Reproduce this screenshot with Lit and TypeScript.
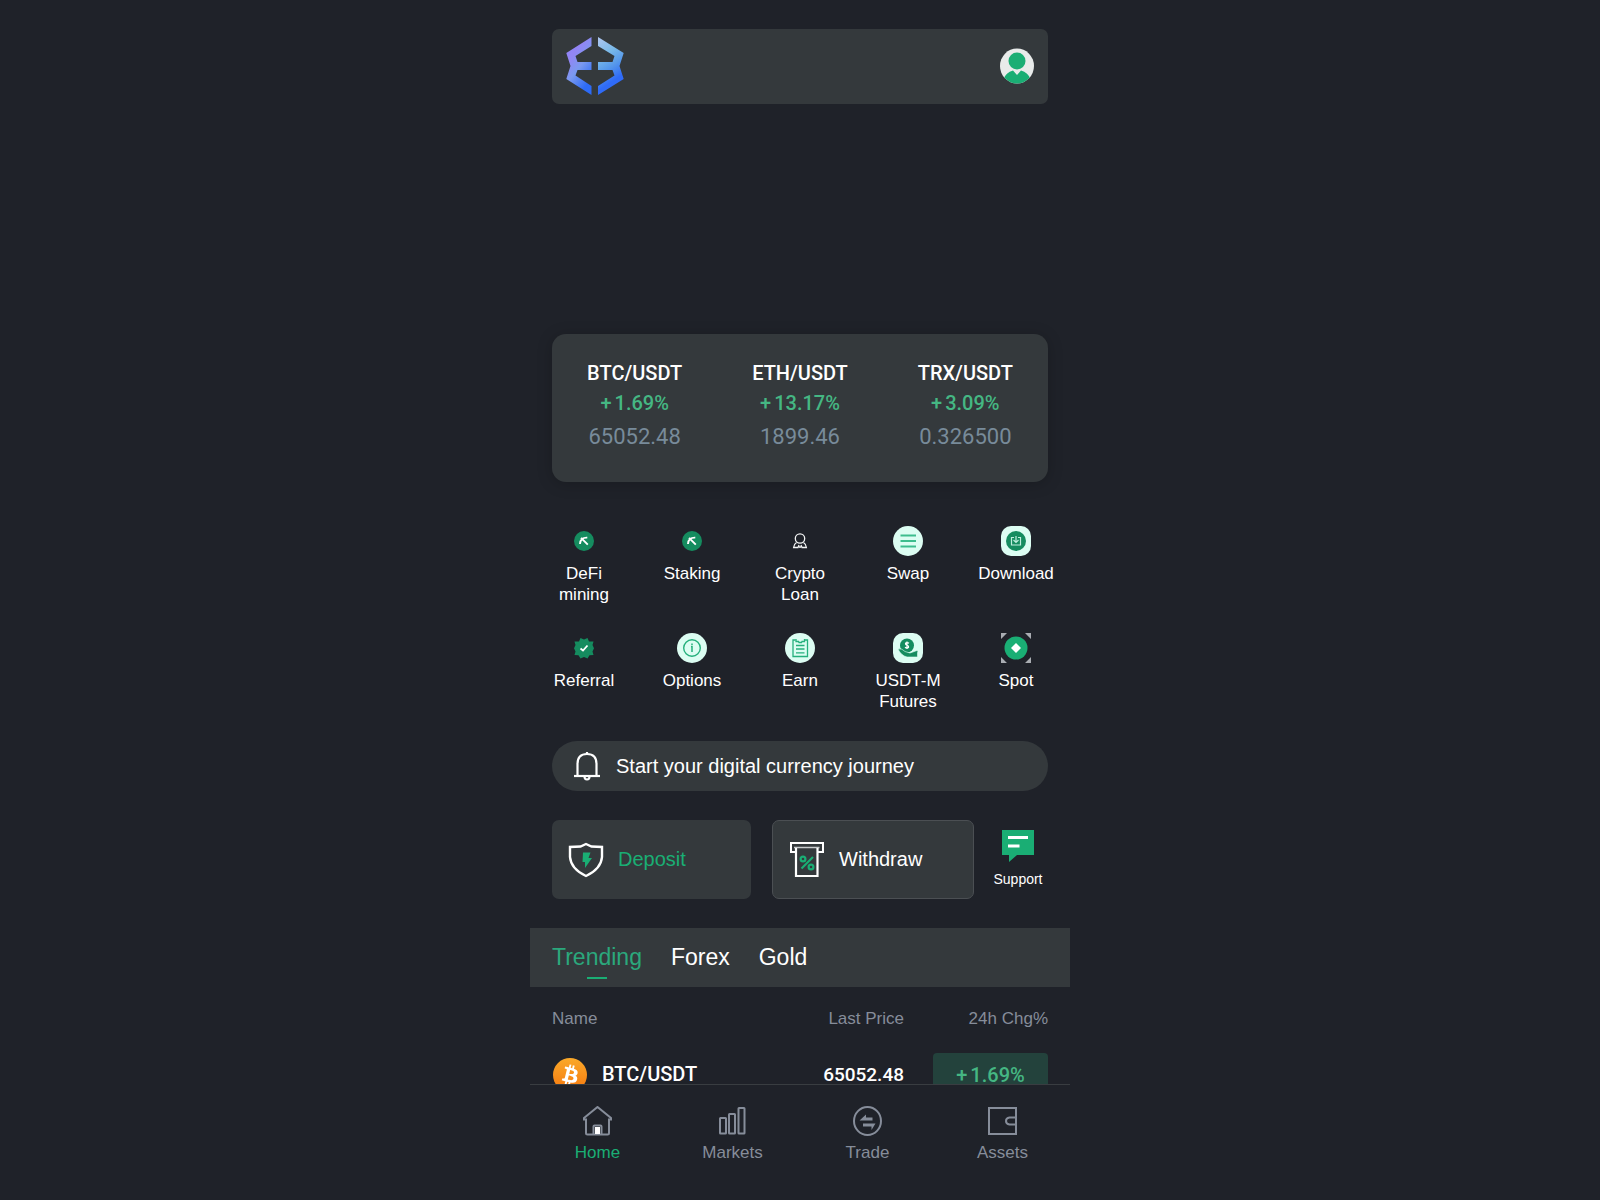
import { LitElement, html, css, svg, TemplateResult } from "lit";
import { customElement, state } from "lit/decorators.js";

interface Ticker { pair: string; change: string; price: string; }
interface Shortcut { label: string; icon: TemplateResult; }

const logo = html`<svg width="58" height="58" viewBox="0 0 58 58" aria-hidden="true">
  <defs>
    <linearGradient id="lg-left" x1="0" y1="0.1" x2="0.5" y2="1">
      <stop offset="0" stop-color="#8f83f8" /><stop offset="0.3" stop-color="#9285f4" />
      <stop offset="0.6" stop-color="#7b9af0" /><stop offset="1" stop-color="#2d6bf6" />
    </linearGradient>
    <linearGradient id="lg-right" x1="0.2" y1="0" x2="0.5" y2="1">
      <stop offset="0" stop-color="#a9c5ef" /><stop offset="0.3" stop-color="#79b9e8" />
      <stop offset="0.55" stop-color="#5698ea" /><stop offset="0.8" stop-color="#2f6bf8" /><stop offset="1" stop-color="#2f6bf8" />
    </linearGradient>
  </defs>
  <path fill="url(#lg-left)" d="M25.500 0V9L9.500 19L11.500 25H25.500V33H11.500L9.500 38.500L25.500 49V58L0.300 42L4.500 29L0.300 16Z" />
  <path fill="url(#lg-right)" d="M32 0V9L48.500 19L46.500 25H32V33H46.500L48.500 38.500L32 49V58L57.700 42L53.500 29L57.700 16Z" />
</svg>`;

const avatar = html`<svg width="34" height="36" viewBox="0 0 34 36" aria-hidden="true">
  <defs><clipPath id="avatar-clip"><ellipse cx="17" cy="18" rx="17" ry="17.500" /></clipPath></defs>
  <ellipse cx="17" cy="18" rx="17" ry="17.500" fill="#e8ebea" />
  <g clip-path="url(#avatar-clip)" fill="#1aae74">
    <circle cx="17" cy="13" r="8.500" />
    <path d="M3 32Q6 24 13 22.500L17 27L21 22.500Q28 24 31 32V37H3Z" />
  </g>
</svg>`;

const miningIcon = html`<svg width="30" height="30" viewBox="0 0 30 30" aria-hidden="true">
  <circle cx="15" cy="15" r="10" fill="#158c5f" />
  <path d="M11 18Q11.300 14.500 13 13Q15 11.400 18.300 11.600M12 11.800L18.800 18.600" fill="none" stroke="#fff" stroke-width="1.900" />
</svg>`;

const loanIcon = html`<svg width="30" height="30" viewBox="0 0 30 30" aria-hidden="true">
  <g fill="none" stroke="#f2f4f4" stroke-width="1.300">
    <circle cx="15" cy="12.500" r="4.700" />
    <path d="M11.500 16.500Q9 18 8.600 21.500H13L14 19M18.500 16.500Q21 18 21.400 21.500H17L16 19" />
  </g>
  <circle cx="15" cy="21" r="1" fill="#fff" />
</svg>`;

const swapIcon = html`<svg width="30" height="30" viewBox="0 0 30 30" aria-hidden="true">
  <circle cx="15" cy="15" r="15" fill="#dcfdf2" />
  <path d="M7.500 9.500H23M7.500 15H23M7.500 20.500H23" stroke="#3dbd8d" stroke-width="2" />
</svg>`;

const downloadIcon = html`<svg width="30" height="30" viewBox="0 0 30 30" aria-hidden="true">
  <rect width="30" height="30" rx="10" fill="#dcfdf2" />
  <circle cx="15" cy="15" r="10" fill="#158c5f" />
  <g fill="none" stroke="#bfeedd" stroke-width="1.200">
    <path d="M13 11.500H10.500V19H19.500V11.500H17" /><path d="M15 10V16M12.500 14L15 16.500L17.500 14" />
  </g>
</svg>`;

const referralIcon = html`<svg width="30" height="30" viewBox="0 0 30 30" aria-hidden="true">
  <path d="M11.500 5L15 6.500L18.500 5L20 8.400L24.500 8.500L23.500 12L25 15.300L23.500 18.500L24.500 22L20.500 22.300L18.500 25.500L15 24L11.500 25.500L9.500 22.300L5.500 22L6.500 18.500L5 15.300L6.500 12L5.500 8.500L10 8.400Z" fill="#158c5f" />
  <path d="M11.500 15.500L14 17.500L18.500 12.500" fill="none" stroke="#fff" stroke-width="1.800" />
</svg>`;

const optionsIcon = html`<svg width="30" height="30" viewBox="0 0 30 30" aria-hidden="true">
  <circle cx="15" cy="15" r="15" fill="#dcfdf2" />
  <circle cx="15" cy="15" r="8.300" fill="none" stroke="#25b07c" stroke-width="1.400" />
  <path d="M15 10.500V12M14 13.500H15V19" fill="none" stroke="#25b07c" stroke-width="1.500" />
</svg>`;

const earnIcon = html`<svg width="30" height="30" viewBox="0 0 30 30" aria-hidden="true">
  <circle cx="15" cy="15" r="15" fill="#dcfdf2" />
  <g fill="none" stroke="#25b07c" stroke-width="1.300">
    <path d="M10.500 7H8V23.500H22.500V7H19.500" /><path d="M11 6V8.500H13.500L14 9.500H16.500L17 8.500H19.500V6" />
    <path d="M11 12.500H19.500M11 16H19.500M11 19.800H19.500" />
  </g>
</svg>`;

const futuresIcon = html`<svg width="30" height="30" viewBox="0 0 30 30" aria-hidden="true">
  <rect width="30" height="30" rx="10" fill="#dcfdf2" />
  <circle cx="14" cy="12.500" r="7" fill="#158c5f" />
  <path d="M5 16Q9 15 12 18.500L17 20L24 17.500Q25.500 18 24.500 20V24H14Q8 22.500 5 16Z" fill="#158c5f" stroke="#dcfdf2" stroke-width="0.600" />
  <path d="M16 10.300Q14 8.800 12.500 10.200Q12.300 11.800 14 12.200Q16 12.800 15.600 14.300Q14 15.800 12 14.200M14 8.500V16" fill="none" stroke="#fff" stroke-width="1.200" />
</svg>`;

const spotIcon = html`<svg width="30" height="30" viewBox="0 0 30 30" aria-hidden="true">
  <path d="M0 0H6L0 6ZM30 0V6L24 0ZM0 30V24L6 30ZM30 30H24L30 24Z" fill="#a9adb2" />
  <circle cx="15" cy="15" r="11.500" fill="#1aae74" />
  <path d="M15 10L20 15L15 20L10 15Z" fill="#fff" />
</svg>`;

const bellIcon = html`<svg width="28" height="30" viewBox="0 0 28 30" aria-hidden="true">
  <g fill="none" stroke="#fff" stroke-width="2.200">
    <path d="M4.500 24V13Q4.500 3 14 3Q23.500 3 23.500 13V24" /><path d="M1 25H27" />
    <path d="M11.500 25.500Q11.500 28.500 14 28.500Q16.500 28.500 16.500 25.500M14 3V1" />
  </g>
</svg>`;

const shieldIcon = html`<svg width="36" height="36" viewBox="0 0 36 36" aria-hidden="true">
  <path d="M18 2L23.500 4.500L34 5V15Q33 27 18 34Q3 27 2 15V5L12.500 4.500Z" fill="none" stroke="#fff" stroke-width="2.400" />
  <path d="M15 10.500H22.500L20.500 16H24L17 26V20H14.500Z" fill="#1aae74" />
</svg>`;

const atmIcon = html`<svg width="36" height="36" viewBox="0 0 36 36" aria-hidden="true">
  <path d="M6 10H2V1H34V10H29" fill="none" stroke="#fff" stroke-width="2" />
  <path d="M5 5.500H30.500" stroke="#c9cccd" stroke-width="1.500" />
  <path d="M7 6V34H28.500V6" fill="none" stroke="#fff" stroke-width="2.200" />
  <g fill="none" stroke="#1aae74" stroke-width="2.200">
    <path d="M12.500 26.500L24 15" /><circle cx="14" cy="17" r="2.400" /><circle cx="22" cy="25" r="2.400" />
  </g>
</svg>`;

const chatIcon = html`<svg width="32" height="32" viewBox="0 0 32 32" aria-hidden="true">
  <path d="M0 0H32V25H15L7 32V25H0Z" fill="#1aae74" />
  <path d="M6 7.500H26M6 16H17.500" stroke="#fff" stroke-width="3" />
</svg>`;

const bitcoinIcon = html`<svg width="34" height="34" viewBox="0 0 32 32" aria-hidden="true">
  <defs><linearGradient id="btc" x1="0" y1="0" x2="0" y2="1">
    <stop offset="0" stop-color="#faa92a" /><stop offset="1" stop-color="#f6780e" /></linearGradient></defs>
  <circle cx="16" cy="16" r="16" fill="url(#btc)" />
  <path fill="#fff" d="M23.189 14.020c.314-2.096-1.283-3.223-3.465-3.975l.708-2.840-1.728-.430-.690 2.765c-.454-.114-.920-.220-1.385-.326l.695-2.783L15.596 6l-.708 2.839c-.376-.086-.746-.170-1.104-.260l.002-.009-2.384-.595-.460 1.846s1.283.294 1.256.312c.700.175.826.638.805 1.006l-.806 3.235c.048.012.110.030.180.057l-.183-.045-1.130 4.532c-.086.212-.303.531-.793.410.018.025-1.256-.313-1.256-.313l-.858 1.978 2.250.561c.418.105.828.215 1.231.318l-.715 2.872 1.727.430.708-2.840c.472.127.930.245 1.378.357l-.706 2.828 1.728.430.715-2.866c2.948.558 5.164.333 6.097-2.333.752-2.146-.037-3.385-1.588-4.192 1.130-.260 1.980-1.003 2.207-2.538zm-3.950 5.538c-.533 2.147-4.148.986-5.320.695l.950-3.805c1.172.293 4.929.872 4.370 3.110zm.535-5.569c-.487 1.953-3.495.960-4.470.717l.860-3.450c.975.243 4.118.696 3.610 2.733z" />
</svg>`;

const homeIcon = svg`<path d="M1 12L14.500 1L28 12V13.500H26V27Q26 28.500 24.500 28.500H4.500Q3 28.500 3 27V13.500H1Z" /><path d="M10.500 28.500V20.500Q10.500 19.500 11.500 19.500H17.500Q18.500 19.500 18.500 20.500V28.500" /><path class="door" d="M12 21H17V28H12Z" />`;
const marketsIcon = svg`<rect x="2" y="12" width="6" height="15.500" rx="0.500" /><rect x="11" y="8" width="6" height="19.500" rx="0.500" /><rect x="20.500" y="2" width="6" height="25.500" rx="0.500" />`;
const tradeIcon = svg`<ellipse cx="14.500" cy="15" rx="13.500" ry="14" /><path class="solid" d="M6.500 14.500L13 8.500V11.500H19.500V14.500ZM22.500 17.500L18.500 24V20.500H10V17.500Z" />`;
const assetsIcon = svg`<path d="M1 2H28V28H1Z" /><path d="M28 11.500H21.500Q18 12 18 15Q18 18 21.500 18.500H28" />`;

@customElement("app-root")
export class AppRoot extends LitElement {
  static styles = css`
    :host {
      display: flex;
      flex-direction: column;
      height: 100vh;
      background: #1f2229;
      color: #fff;
      font-family: "Liberation Sans", Arial, sans-serif;
      font-size: 17px;
      line-height: 21px;
    }
    * { box-sizing: border-box; }
    svg { display: block; flex: none; }
    a { color: inherit; text-decoration: none; }
    button {
      font: inherit;
      color: inherit;
      background: none;
      border: 0;
      padding: 0;
      cursor: pointer;
    }
    .scroll {
      flex: 1;
      min-height: 0;
      overflow-y: auto;
      scrollbar-width: none;
      background: #1f2229;
    }
    .column { width: 100%; max-width: 540px; margin: 0 auto; }
    .inset { margin-left: 22px; margin-right: 22px; }
    .topbar {
      margin-top: 29px;
      padding: 7px 14px 9px;
      display: flex;
      align-items: center;
      justify-content: space-between;
      height: 75px;
      border-radius: 7px;
      background: #34393c;
    }
    .tickers {
      margin-top: 230px;
      padding: 25px 0 28px;
      display: grid;
      grid-template-columns: repeat(3, 1fr);
      border-radius: 14px;
      background: #34393c;
      box-shadow: 0 2px 16px rgba(0, 0, 0, 0.2);
      text-align: center;
      font-family: Roboto, "Liberation Sans", sans-serif;
      font-size: 20px;
    }
    .ticker { display: flex; flex-direction: column; }
    .pair { line-height: 28px; font-weight: 500; }
    .change { line-height: 33px; color: #45b783; font-weight: 500; }
    .sign { margin-right: 3px; }
    .price { line-height: 34px; font-size: 22px; color: #788b9a; }
    .shortcuts {
      display: grid;
      grid-template-columns: repeat(5, 1fr);
      row-gap: 28px;
      margin-top: 44px;
    }
    .shortcut {
      display: flex;
      flex-direction: column;
      align-items: center;
      gap: 7px;
      text-align: center;
    }
    .shortcut span { max-width: 80px; }
    .notice {
      margin-top: 29px;
      height: 50px;
      padding: 0 21px;
      display: flex;
      align-items: center;
      gap: 15px;
      border-radius: 25px;
      background: #34393c;
      font-size: 20px;
    }
    .actions {
      margin-top: 29px;
      display: grid;
      grid-template-columns: 220fr 202fr 74fr;
      align-items: center;
      font-size: 20px;
    }
    .action {
      display: flex;
      align-items: center;
      gap: 14px;
      height: 79px;
      padding: 0 16px;
      border-radius: 7px;
      background: #34393c;
    }
    .deposit { color: #1aae74; margin-right: 21px; }
    .withdraw { border: 1px solid #4b4f53; }
    .support {
      display: flex;
      flex-direction: column;
      align-items: center;
      gap: 7px;
      padding-left: 14px;
      font-size: 14px;
    }
    .tabs {
      margin-top: 29px;
      height: 59px;
      padding: 0 22px;
      display: flex;
      gap: 29px;
      background: #34393c;
      font-size: 23px;
    }
    .tab {
      display: flex;
      flex-direction: column;
      align-items: center;
      padding-top: 16px;
      line-height: 27px;
    }
    .tab::after {
      content: "";
      width: 20px;
      height: 2px;
      margin-top: 6px;
    }
    .tab.active { color: #2ba87c; }
    .tab.active::after { background: #1aae74; }
    .market { padding: 0 22px; }
    table { width: 100%; border-collapse: collapse; }
    th { height: 66px; padding: 0 0 4px; font-weight: 400; color: #868d9a; text-align: left; }
    td { padding: 0; font-family: Roboto, "Liberation Sans", sans-serif; font-size: 20px; }
    .num { text-align: right; }
    .chg { width: 144px; }
    .pairCell { display: flex; align-items: center; gap: 15px; padding-left: 1px; font-weight: 500; }
    .last { font-size: 19px; font-weight: 500; }
    .badge {
      display: block;
      width: 115px;
      height: 43px;
      margin-left: auto;
      border-radius: 4px;
      background: #23423c;
      color: #45b783;
      font-weight: 500;
      line-height: 44px;
      text-align: center;
    }
    .nav {
      display: grid;
      grid-template-columns: repeat(4, 1fr);
      height: 116px;
      border-top: 1px solid #393d41;
      color: #868d9a;
    }
    .navItem {
      display: flex;
      flex-direction: column;
      align-items: center;
      gap: 6px;
      padding-top: 21px;
    }
    .navItem svg { fill: none; stroke: #868d9a; stroke-width: 2; }
    .navItem .door { fill: #fff; stroke: none; }
    .navItem .solid { fill: #868d9a; stroke: none; }
    .navItem.current { color: #1aae74; }
  `;

  @state() private activeTab = "Trending";

  private tickers: Ticker[] = [
    { pair: "BTC/USDT", change: "1.69%", price: "65052.48" },
    { pair: "ETH/USDT", change: "13.17%", price: "1899.46" },
    { pair: "TRX/USDT", change: "3.09%", price: "0.326500" },
  ];

  private shortcuts: Shortcut[] = [
    { label: "DeFi mining", icon: miningIcon },
    { label: "Staking", icon: miningIcon },
    { label: "Crypto Loan", icon: loanIcon },
    { label: "Swap", icon: swapIcon },
    { label: "Download", icon: downloadIcon },
    { label: "Referral", icon: referralIcon },
    { label: "Options", icon: optionsIcon },
    { label: "Earn", icon: earnIcon },
    { label: "USDT-M Futures", icon: futuresIcon },
    { label: "Spot", icon: spotIcon },
  ];

  private navItems = [
    { label: "Home", icon: homeIcon },
    { label: "Markets", icon: marketsIcon },
    { label: "Trade", icon: tradeIcon },
    { label: "Assets", icon: assetsIcon },
  ];

  render() {
    return html`
      <main class="scroll">
        <div class="column">
          <header class="topbar inset">
            <a href="#home">${logo}</a>
            <button>${avatar}</button>
          </header>

          <section class="tickers inset">
            ${this.tickers.map((t) => html`
              <a class="ticker" href="#trade">
                <span class="pair">${t.pair}</span>
                <span class="change"><span class="sign">+</span>${t.change}</span>
                <span class="price">${t.price}</span>
              </a>`)}
          </section>

          <nav class="shortcuts">
            ${this.shortcuts.map((s) => html`
              <a class="shortcut" href="#shortcut">${s.icon}<span>${s.label}</span></a>`)}
          </nav>

          <div class="notice inset">${bellIcon}<span>Start your digital currency journey</span></div>

          <div class="actions inset">
            <button class="action deposit">${shieldIcon}<span>Deposit</span></button>
            <button class="action withdraw">${atmIcon}<span>Withdraw</span></button>
            <a class="support" href="#support">${chatIcon}<span>Support</span></a>
          </div>

          <div class="tabs">
            ${["Trending", "Forex", "Gold"].map((tab) => html`
              <button class="tab ${tab === this.activeTab ? "active" : ""}"
                @click=${() => { this.activeTab = tab; }}>${tab}</button>`)}
          </div>

          <div class="market">
            <table>
              <thead>
                <tr><th>Name</th><th class="num">Last Price</th><th class="num chg">24h Chg%</th></tr>
              </thead>
              <tbody>
                <tr>
                  <td><div class="pairCell">${bitcoinIcon}<span>BTC/USDT</span></div></td>
                  <td class="num last">65052.48</td>
                  <td class="num"><span class="badge"><span class="sign">+</span>1.69%</span></td>
                </tr>
              </tbody>
            </table>
          </div>
        </div>
      </main>

      <nav class="nav column">
        ${this.navItems.map((item, i) => html`
          <a class="navItem ${i === 0 ? "current" : ""}" href="#nav">
            <svg width="30" height="30" viewBox="0 0 30 30" aria-hidden="true">${item.icon}</svg>
            <span>${item.label}</span>
          </a>`)}
      </nav>
    `;
  }
}
